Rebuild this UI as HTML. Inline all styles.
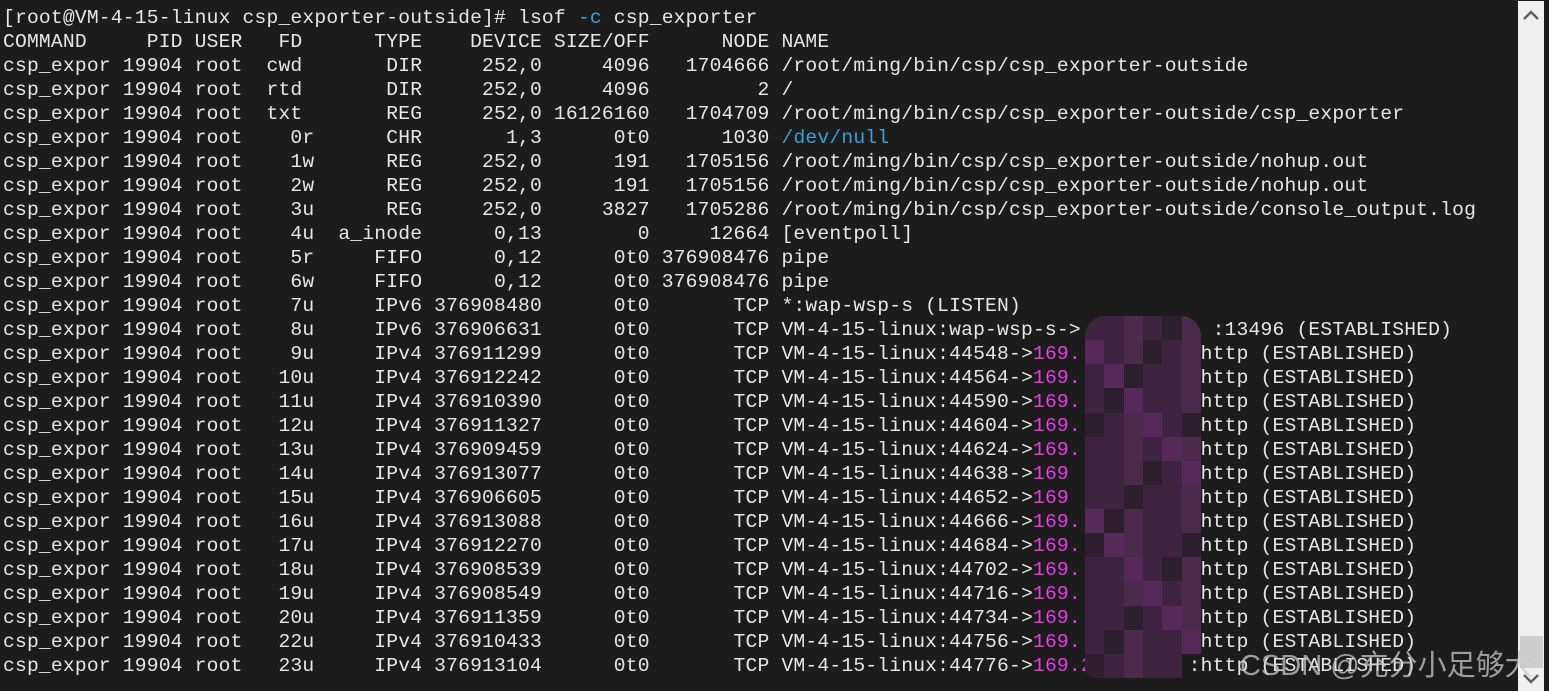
<!DOCTYPE html>
<html><head><meta charset="utf-8"><style>
html,body{margin:0;padding:0;background:#1c1c1c;width:1549px;height:691px;overflow:hidden;position:relative}
pre{position:absolute;left:3px;top:6px;margin:0;font-family:"Liberation Mono",monospace;font-size:19.65px;letter-spacing:0.19px;line-height:24px;color:#e6e6e6}
.p{color:#e83be8}.b{color:#3aa0d8}
.sb{position:absolute;left:1518px;top:1px;width:26px;height:690px;background:#f0f0f0}
.thumb{position:absolute;left:1520px;top:636px;width:23px;height:32px;background:#cdcdcd}
.blob{position:absolute;left:1085px;top:316px;width:116px;height:362px;border-radius:20px 20px 10px 10px;overflow:hidden;display:grid;grid-template-columns:repeat(6,1fr);grid-template-rows:repeat(15,1fr)}
.blob div{background:#3e2440}
.blob div:nth-child(3n){background:#4c2a4c}
.blob div:nth-child(5n){background:#2e1f2e}
.blob div:nth-child(7n){background:#57295a}
.wm{position:absolute;left:1240px;top:642px;font-family:"Liberation Sans","Noto Sans CJK SC",sans-serif;font-size:29px;color:rgba(200,200,200,0.75);white-space:nowrap}
</style></head><body>
<pre>[root@VM-4-15-linux csp_exporter-outside]# lsof <span class="b">-c</span> csp_exporter
COMMAND     PID USER   FD      TYPE    DEVICE SIZE/OFF      NODE NAME
csp_expor 19904 root  cwd       DIR     252,0     4096   1704666 /root/ming/bin/csp/csp_exporter-outside
csp_expor 19904 root  rtd       DIR     252,0     4096         2 /
csp_expor 19904 root  txt       REG     252,0 16126160   1704709 /root/ming/bin/csp/csp_exporter-outside/csp_exporter
csp_expor 19904 root    0r      CHR       1,3      0t0      1030 <span class="b">/dev/null</span>
csp_expor 19904 root    1w      REG     252,0      191   1705156 /root/ming/bin/csp/csp_exporter-outside/nohup.out
csp_expor 19904 root    2w      REG     252,0      191   1705156 /root/ming/bin/csp/csp_exporter-outside/nohup.out
csp_expor 19904 root    3u      REG     252,0     3827   1705286 /root/ming/bin/csp/csp_exporter-outside/console_output.log
csp_expor 19904 root    4u  a_inode      0,13        0     12664 [eventpoll]
csp_expor 19904 root    5r     FIFO      0,12      0t0 376908476 pipe
csp_expor 19904 root    6w     FIFO      0,12      0t0 376908476 pipe
csp_expor 19904 root    7u     IPv6 376908480      0t0       TCP *:wap-wsp-s (LISTEN)
csp_expor 19904 root    8u     IPv6 376906631      0t0       TCP VM-4-15-linux:wap-wsp-s->           :13496 (ESTABLISHED)
csp_expor 19904 root    9u     IPv4 376911299      0t0       TCP VM-4-15-linux:44548-><span class="p">169.</span>          http (ESTABLISHED)
csp_expor 19904 root   10u     IPv4 376912242      0t0       TCP VM-4-15-linux:44564-><span class="p">169.</span>          http (ESTABLISHED)
csp_expor 19904 root   11u     IPv4 376910390      0t0       TCP VM-4-15-linux:44590-><span class="p">169.</span>          http (ESTABLISHED)
csp_expor 19904 root   12u     IPv4 376911327      0t0       TCP VM-4-15-linux:44604-><span class="p">169.</span>          http (ESTABLISHED)
csp_expor 19904 root   13u     IPv4 376909459      0t0       TCP VM-4-15-linux:44624-><span class="p">169.</span>         :http (ESTABLISHED)
csp_expor 19904 root   14u     IPv4 376913077      0t0       TCP VM-4-15-linux:44638-><span class="p">169</span>           http (ESTABLISHED)
csp_expor 19904 root   15u     IPv4 376906605      0t0       TCP VM-4-15-linux:44652-><span class="p">169</span>           http (ESTABLISHED)
csp_expor 19904 root   16u     IPv4 376913088      0t0       TCP VM-4-15-linux:44666-><span class="p">169.</span>          http (ESTABLISHED)
csp_expor 19904 root   17u     IPv4 376912270      0t0       TCP VM-4-15-linux:44684-><span class="p">169.</span>          http (ESTABLISHED)
csp_expor 19904 root   18u     IPv4 376908539      0t0       TCP VM-4-15-linux:44702-><span class="p">169.</span>         :http (ESTABLISHED)
csp_expor 19904 root   19u     IPv4 376908549      0t0       TCP VM-4-15-linux:44716-><span class="p">169.</span>         :http (ESTABLISHED)
csp_expor 19904 root   20u     IPv4 376911359      0t0       TCP VM-4-15-linux:44734-><span class="p">169.</span>         :http (ESTABLISHED)
csp_expor 19904 root   22u     IPv4 376910433      0t0       TCP VM-4-15-linux:44756-><span class="p">169.</span>         :http (ESTABLISHED)
csp_expor 19904 root   23u     IPv4 376913104      0t0       TCP VM-4-15-linux:44776-><span class="p">169.2</span>        :http (ESTABLISHED)</pre>
<div class="blob"><div></div><div></div><div></div><div></div><div></div><div></div><div></div><div></div><div></div><div></div><div></div><div></div><div></div><div></div><div></div><div></div><div></div><div></div><div></div><div></div><div></div><div></div><div></div><div></div><div></div><div></div><div></div><div></div><div></div><div></div><div></div><div></div><div></div><div></div><div></div><div></div><div></div><div></div><div></div><div></div><div></div><div></div><div></div><div></div><div></div><div></div><div></div><div></div><div></div><div></div><div></div><div></div><div></div><div></div><div></div><div></div><div></div><div></div><div></div><div></div><div></div><div></div><div></div><div></div><div></div><div></div><div></div><div></div><div></div><div></div><div></div><div></div><div></div><div></div><div></div><div></div><div></div><div></div><div></div><div></div><div></div><div></div><div></div><div></div><div></div><div></div><div></div><div></div><div></div></div>
<div class="sb"></div>
<div class="thumb"></div>
<svg style="position:absolute;left:1522px;top:8px" width="18" height="14"><path d="M2 11 L9 4 L16 11" stroke="#606060" stroke-width="2.5" fill="none"/></svg>
<svg style="position:absolute;left:1522px;top:672px" width="18" height="14"><path d="M2 3 L9 10 L16 3" stroke="#606060" stroke-width="2.5" fill="none"/></svg>
<div class="wm">CSDN @充分小足够大</div>
</body></html>
